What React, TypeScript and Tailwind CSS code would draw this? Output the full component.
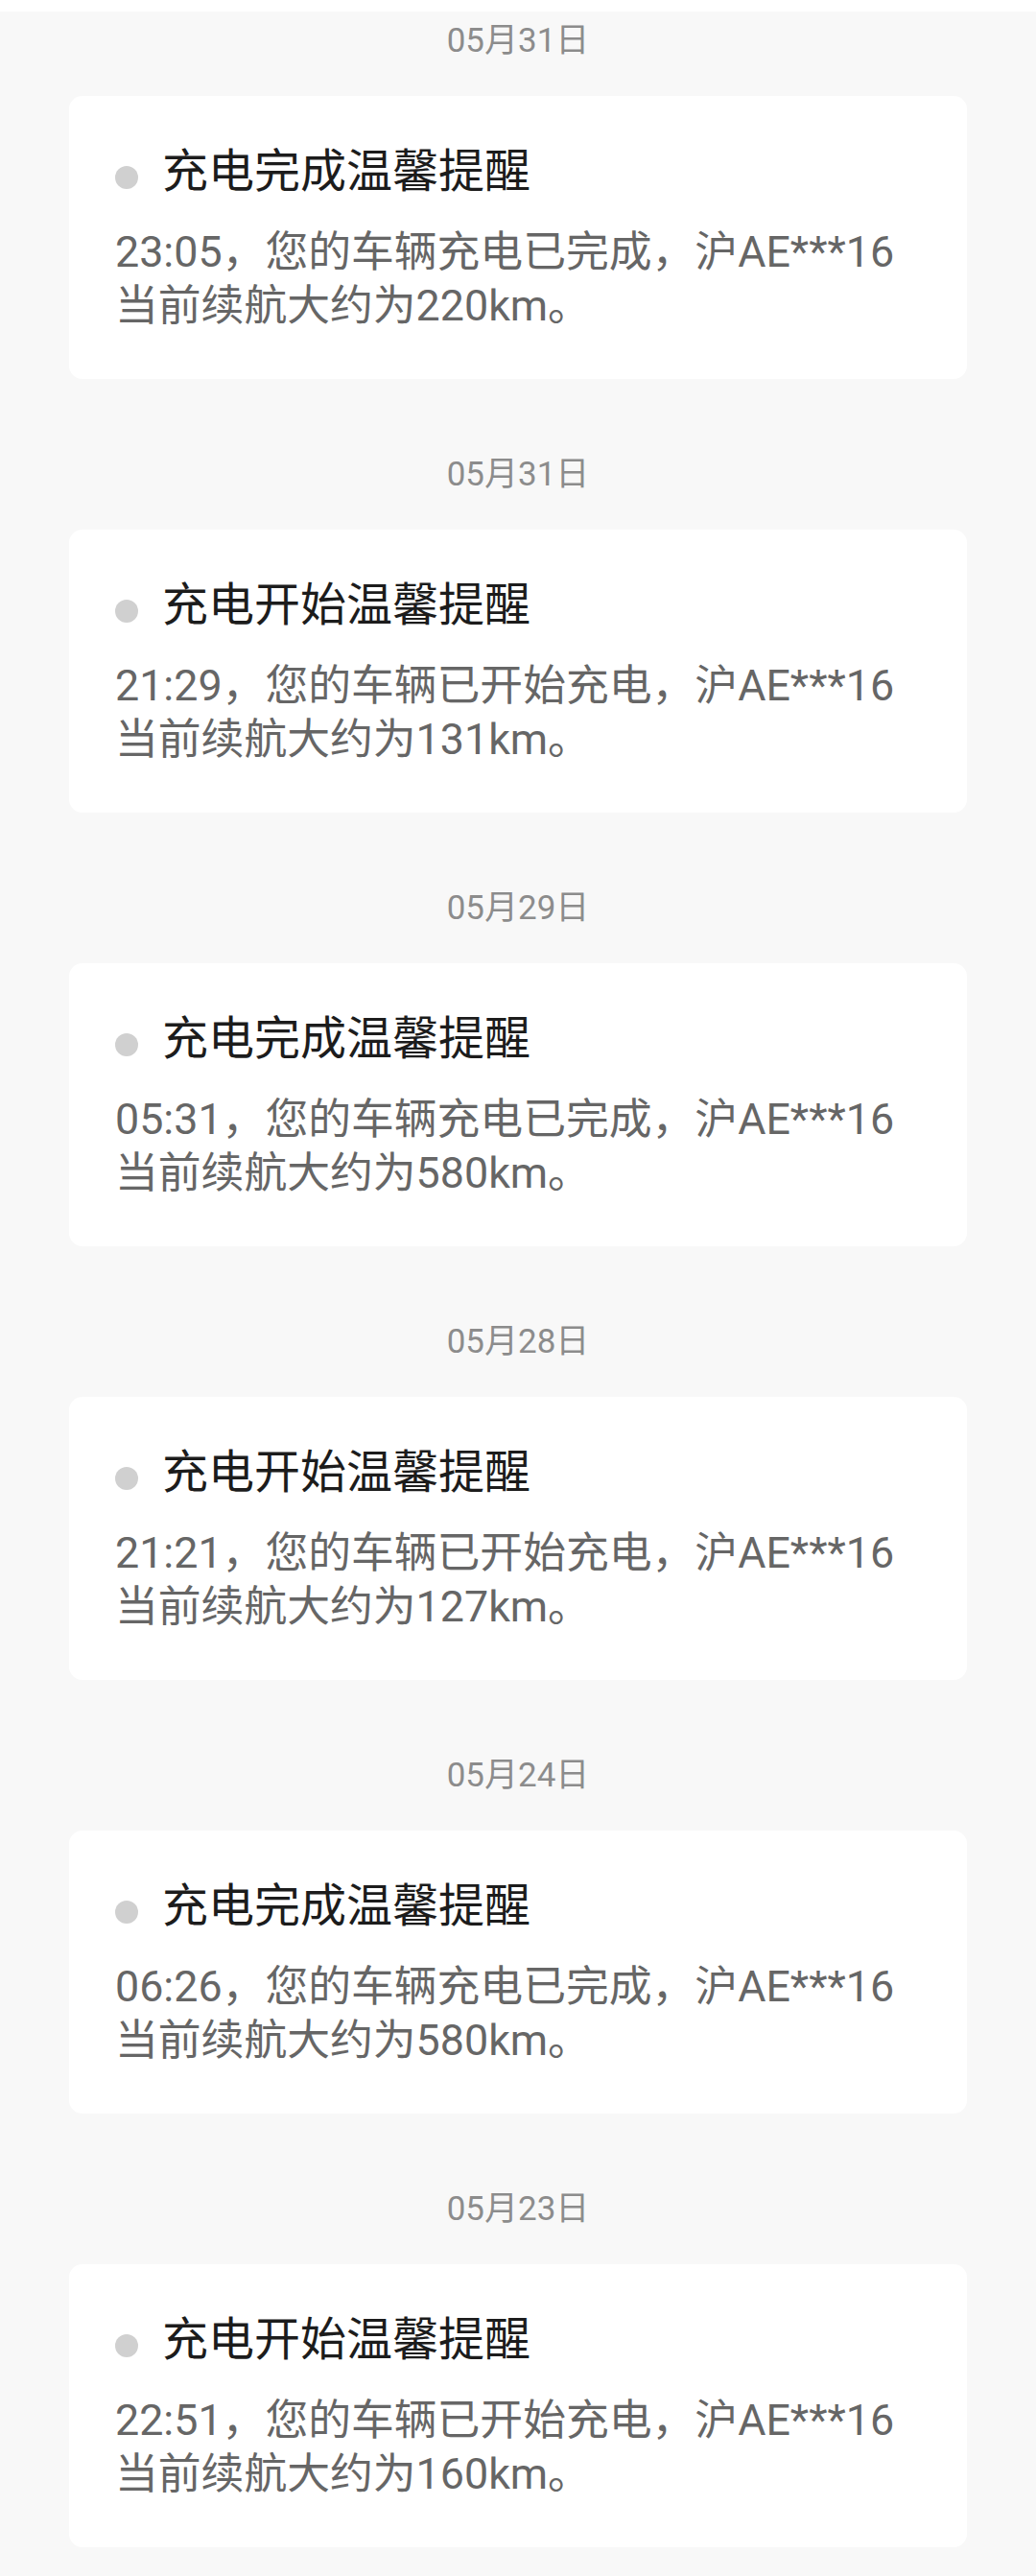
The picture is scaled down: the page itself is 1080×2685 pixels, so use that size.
import React from "react";

type Notice = {
  id: number;
  date: string;
  title: string;
  time: string;
  action: string;
  range: string;
};

const notices: Notice[] = [
  { id: 1, date: "05月31日", title: "充电完成温馨提醒", time: "23:05", action: "您的车辆充电已完成", range: "220" },
  { id: 2, date: "05月31日", title: "充电开始温馨提醒", time: "21:29", action: "您的车辆已开始充电", range: "131" },
  { id: 3, date: "05月29日", title: "充电完成温馨提醒", time: "05:31", action: "您的车辆充电已完成", range: "580" },
  { id: 4, date: "05月28日", title: "充电开始温馨提醒", time: "21:21", action: "您的车辆已开始充电", range: "127" },
  { id: 5, date: "05月24日", title: "充电完成温馨提醒", time: "06:26", action: "您的车辆充电已完成", range: "580" },
  { id: 6, date: "05月23日", title: "充电开始温馨提醒", time: "22:51", action: "您的车辆已开始充电", range: "160" },
];

function NoticeCard({ notice }: { notice: Notice }) {
  return (
    <div className="mb-[69px]">
      {/* 日期 */}
      <div className="mb-[26px] text-center text-[35px] leading-[62px] text-[#8c8c8c]">
        {notice.date}
      </div>

      <div className="mx-[72px] h-[295px] rounded-[14px] bg-white pl-[48px] pr-[40px] pt-[49px]">
        <div className="flex items-start">
          <span className="mt-[24px] h-[24px] w-[24px] shrink-0 rounded-full bg-[#d0d0d0]" />
          <div className="ml-[25px] text-[48px] leading-[60px] text-[#1c1c1c]">
            {notice.title}
          </div>
        </div>
        <div className="mt-[26px] text-[44.8px] leading-[56px] text-[#666666]">
          <div className="whitespace-nowrap">
            {notice.time}，{notice.action}，沪AE***16
          </div>
          <div>当前续航大约为{notice.range}km。</div>
        </div>
      </div>
    </div>
  );
}

export default function App() {
  return (
    <div
      className="min-h-screen w-[1080px] bg-[#f8f8f8]"
      style={{ fontFamily: "Roboto, 'Noto Sans CJK SC', sans-serif" }}
    >
      <div className="h-[12px] bg-white" />
      {notices.map((notice) => (
        <NoticeCard key={notice.id} notice={notice} />
      ))}
    </div>
  );
}
